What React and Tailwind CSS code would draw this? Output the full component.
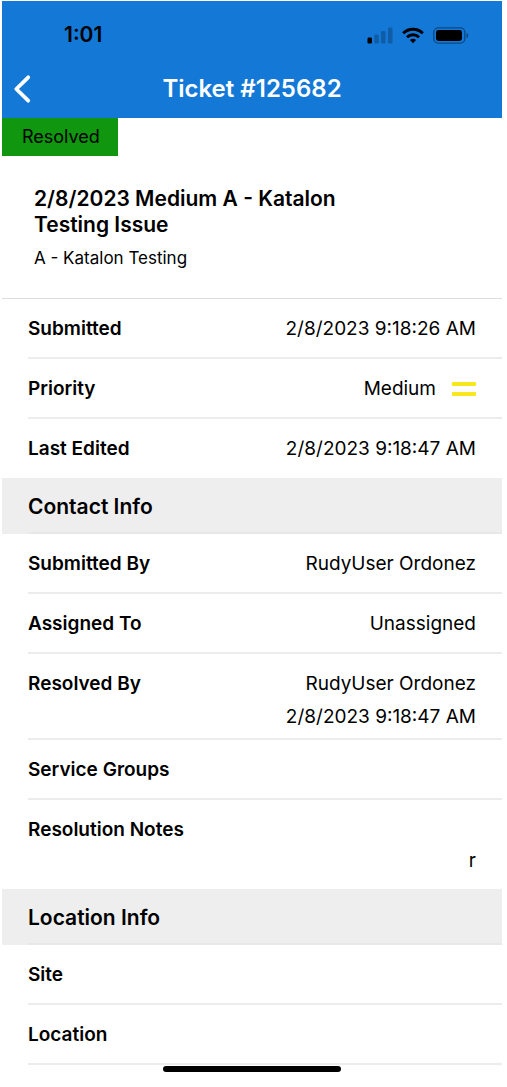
/**
 * Ticket Detail Page
 * -----------------------
 * Mobile view of a single ticket: status bar, navigation header,
 * status badge, summary and the grouped detail rows.
 */

/** Detail rows shown directly below the ticket title */
const GENERAL_ROWS = [
    { label: "Submitted", value: "2/8/2023 9:18:26 AM" },
    { label: "Priority", value: "Medium", icon: <MediumPriorityIcon /> },
    { label: "Last Edited", value: "2/8/2023 9:18:47 AM", last: true },
];

export default function TicketPage() {
    return (
        <div className="min-h-screen bg-white pt-px pl-[2px] pr-[5px] pb-3 font-['Inter',sans-serif] text-black">
            {/* ---- Status Bar + Navigation ---- */}
            <header className="bg-[#1478d7]">
                <div className="flex h-[58px] items-center justify-between pt-[10px] pr-[33px] pl-[62px]">
                    <span className="text-[21px] leading-6 font-semibold">1:01</span>
                    <div className="flex items-center gap-[9px]">
                        <SignalIcon />
                        <WifiIcon />
                        <BatteryIcon />
                    </div>
                </div>
                <div className="grid h-[59px] grid-cols-[48px_1fr_48px] items-center">
                    <button type="button" aria-label="Back" className="flex h-full items-center pl-[11px] text-white">
                        <svg width="19" height="30" viewBox="0 0 19 30" fill="none" stroke="currentColor" strokeWidth="3.8" strokeLinecap="round" strokeLinejoin="round">
                            <path d="M15.200 3.300 3.300 15l11.900 11.700" />
                        </svg>
                    </button>
                    <h1 className="text-center text-[24px] leading-7 font-semibold text-white">
                        Ticket #125682
                    </h1>
                </div>
            </header>

            <main>
                {/* ---- Ticket Summary ---- */}
                <div className="inline-flex h-[38px] items-center bg-[#10960f] pr-[18px] pl-5 align-top text-[18px] leading-6">
                    Resolved
                </div>
                <section className="border-b border-[#dedede] px-8 pt-[30px] pb-7">
                    <h2 className="max-w-[340px] text-[21px] leading-[26px] font-semibold">
                        2/8/2023 Medium A - Katalon Testing Issue
                    </h2>
                    <p className="mt-2 text-[17px] leading-6">A - Katalon Testing</p>
                </section>

                {/* ---- General ---- */}
                <dl>
                    {GENERAL_ROWS.map((row) => (
                        <DetailRow key={row.label} {...row} />
                    ))}
                </dl>

                {/* ---- Contact Info ---- */}
                <SectionHeading title="Contact Info" />
                <dl>
                    <DetailRow label="Submitted By" value="RudyUser Ordonez" />
                    <DetailRow label="Assigned To" value="Unassigned" />
                    <div className="ml-[26px] flex justify-between border-b-2 border-[#ececec] pt-[18px] pr-[26px] pb-[9px] text-[19px] leading-6">
                        <dt className="font-semibold">Resolved By</dt>
                        <dd className="flex flex-col gap-[9px] text-right">
                            <span>RudyUser Ordonez</span>
                            <span>2/8/2023 9:18:47 AM</span>
                        </dd>
                    </div>
                    <DetailRow label="Service Groups" />
                    <div className="ml-[26px] flex flex-col gap-[7px] pt-[18px] pr-[26px] pb-4 text-[19px] leading-6">
                        <dt className="font-semibold">Resolution Notes</dt>
                        <dd className="text-right">r</dd>
                    </div>
                </dl>

                {/* ---- Location Info ---- */}
                <SectionHeading title="Location Info" />
                <dl>
                    <DetailRow label="Site" />
                    <DetailRow label="Location" />
                </dl>
            </main>

            {/* Home indicator */}
            <div className="mx-auto mt-px h-[6px] w-[178px] rounded-full bg-black" />
        </div>
    );
}

/**
 * One label / value line.
 * @param {Object} props
 * @param {string} props.label - Field name
 * @param {string} [props.value] - Field value, blank when not set
 * @param {JSX.Element} [props.icon] - Icon after the value
 * @param {boolean} [props.last] - Leaves out the divider
 */
function DetailRow({ label, value, icon, last }) {
    return (
        <div
            className={`ml-[26px] flex justify-between pt-[18px] pr-[26px] text-[19px] leading-6 ${
                last ? "pb-[17px]" : "border-b-2 border-[#ececec] pb-4"
            }`}
        >
            <dt className="font-semibold">{label}</dt>
            <dd className="flex items-center gap-4">
                {value}
                {icon}
            </dd>
        </div>
    );
}

/** Grey heading bar between groups of rows */
function SectionHeading({ title }) {
    return (
        <div className="bg-[#eeeeee] pl-[26px]">
            <h3 className="border-b-2 border-[#e8e8e8] pt-[15px] pb-[11px] text-[21px] leading-7 font-semibold">
                {title}
            </h3>
        </div>
    );
}

/* ---- Icons ---- */

function MediumPriorityIcon() {
    return (
        <svg width="24" height="14" viewBox="0 0 24 14" fill="#f8e71c" aria-hidden="true">
            <rect width="24" height="4" rx="1" />
            <rect y="10" width="24" height="4" rx="1" />
        </svg>
    );
}

function SignalIcon() {
    return (
        <svg width="26" height="17" viewBox="0 0 26 17" aria-hidden="true">
            <rect x="0.5" y="10.5" width="4.5" height="6" rx="1.2" />
            <g opacity="0.22">
                <rect x="7.3" y="7.5" width="4.5" height="9" rx="1.2" />
                <rect x="14" y="4" width="4.5" height="12.5" rx="1.2" />
                <rect x="21" y="0.5" width="4.5" height="16" rx="1.2" />
            </g>
        </svg>
    );
}

function WifiIcon() {
    return (
        <svg width="22" height="17" viewBox="0 0 22 17" fill="none" stroke="#000" strokeWidth="3" aria-hidden="true">
            <path d="M1.2 6.2a14 14 0 0 1 19.6 0" />
            <path d="M5 10.3a8.6 8.6 0 0 1 12 0" />
            <path d="M11 16.2 7.9 13a4.4 4.4 0 0 1 6.2 0z" fill="#000" stroke="none" />
        </svg>
    );
}

function BatteryIcon() {
    return (
        <svg width="36" height="17" viewBox="0 0 36 17" aria-hidden="true">
            <rect x="0.8" y="0.8" width="31" height="15.4" rx="4.4" fill="none" stroke="#000" strokeOpacity="0.4" strokeWidth="1.3" />
            <rect x="3" y="3" width="26" height="11" rx="2.4" />
            <path d="M33.5 6v5.200c1-.4 1.800-1.400 1.800-2.600s-.8-2.200-1.800-2.600z" opacity="0.45" />
        </svg>
    );
}
